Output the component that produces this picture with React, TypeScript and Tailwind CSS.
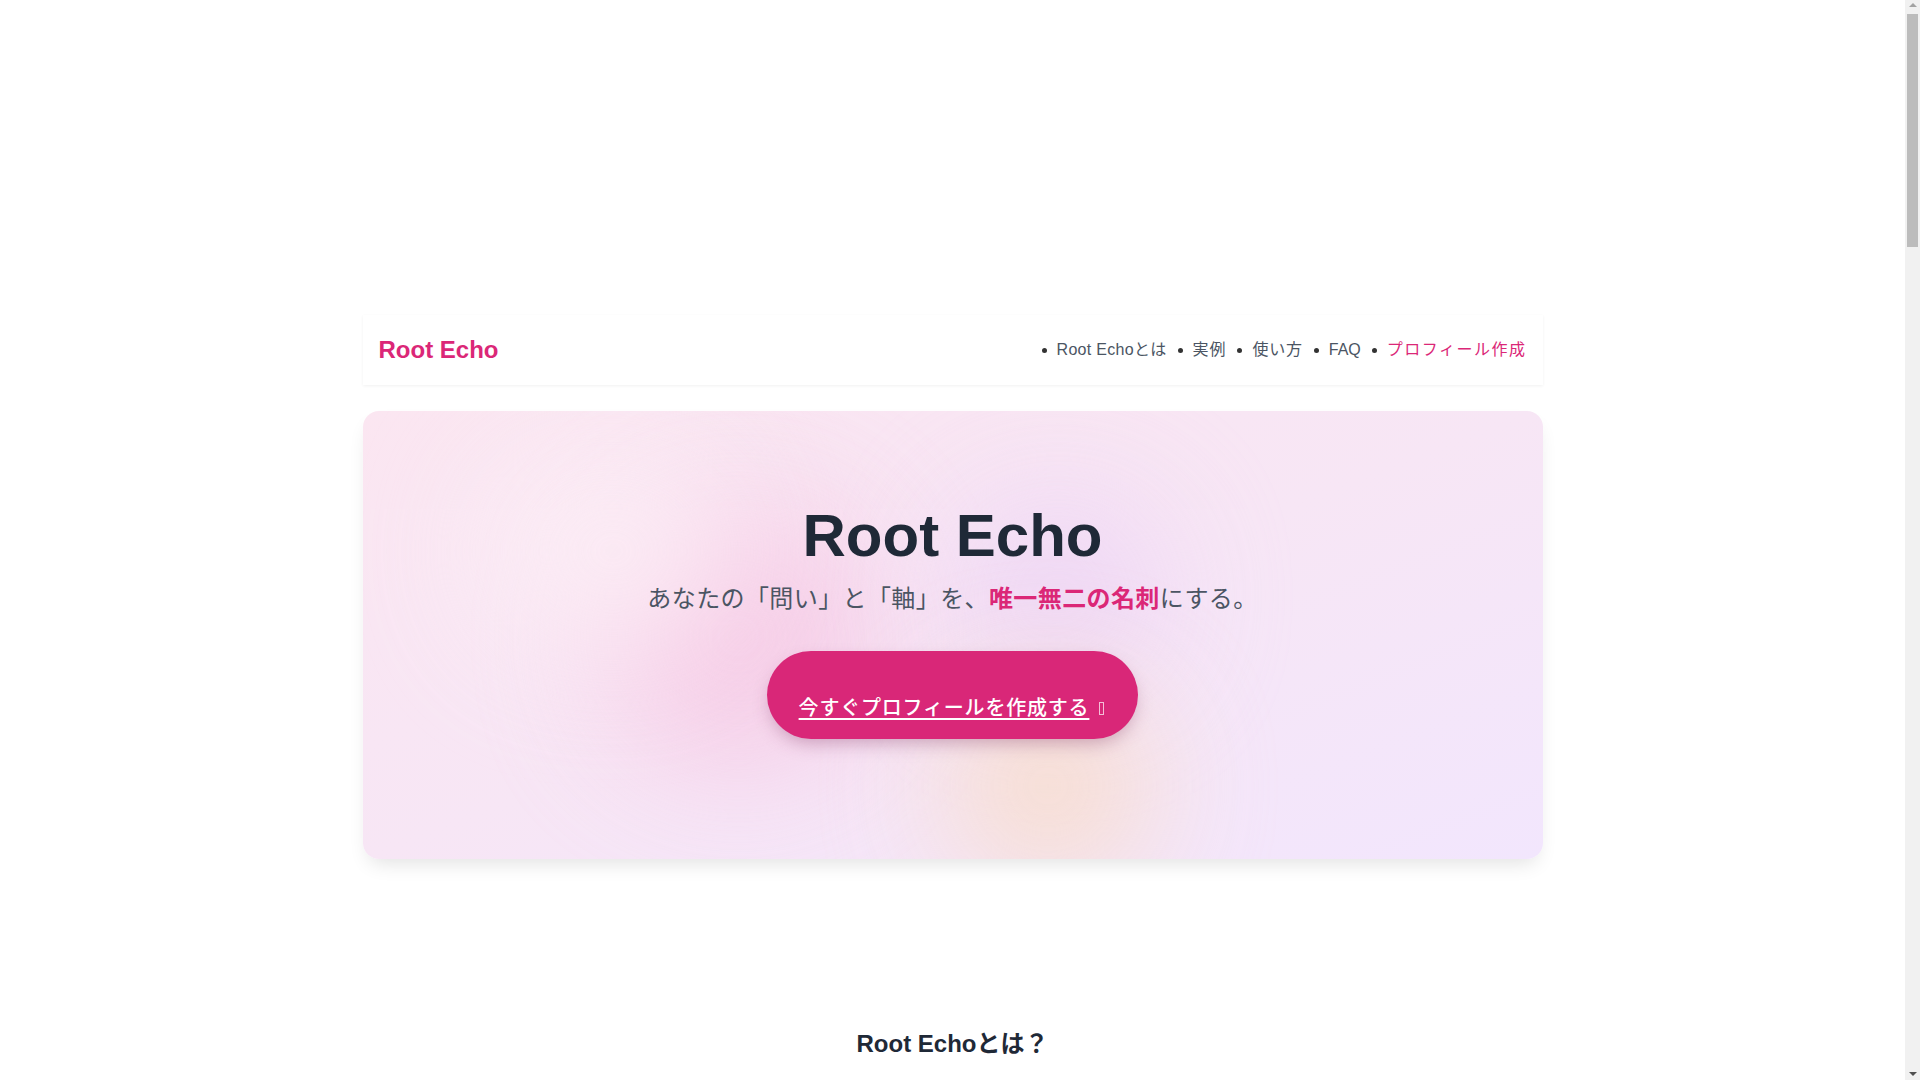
import React from "react";

const sans = '"Liberation Sans", Arial, "Noto Sans CJK JP", sans-serif';

function FakeScrollbar() {
  return (
    <div className="fixed right-0 top-0 w-[15px] h-screen bg-[#f1f1f1] flex flex-col items-center">
      <div className="mt-[3px] w-0 h-0 border-l-[4px] border-r-[4px] border-b-[4px] border-l-transparent border-r-transparent border-b-[#a3a3a3]" />
      <div className="mt-[7px] w-[11px] h-[233px] bg-[#bcbcbc]" />
      <div className="flex-1" />
      <div className="mb-[4px] w-0 h-0 border-l-[4px] border-r-[4px] border-t-[4px] border-l-transparent border-r-transparent border-t-[#505050]" />
    </div>
  );
}

function NavItem({ children, className }: { children: React.ReactNode; className: string }) {
  return (
    <li className="flex items-center">
      <span className="w-[5px] h-[5px] rounded-full bg-[#333] mr-[10px]" />
      <span className={className}>{children}</span>
    </li>
  );
}

export default function App() {
  return (
    <div className="min-h-screen bg-white" style={{ fontFamily: sans }}>
      <div className="w-[1905px]">
        <div className="w-[1180px] mx-auto pt-[315px]">
          {/* Header */}
          <header className="h-[70px] flex items-center justify-between px-4 bg-white shadow-[0_1px_3px_rgba(0,0,0,0.06)]">
            <a className="text-[24px] font-bold text-[#db2777] leading-8">Root Echo</a>
            <nav>
              <ul className="flex items-center gap-[11px] text-[16px] text-[#4b5563]">
                <NavItem className="tracking-[0.3px]">Root Echoとは</NavItem>
                <NavItem className="tracking-[0.9px]">実例</NavItem>
                <NavItem className="tracking-[0.8px]">使い方</NavItem>
                <NavItem className="">FAQ</NavItem>
                <NavItem className="text-[#db2777] tracking-[1.5px]">プロフィール作成</NavItem>
              </ul>
            </nav>
          </header>

          {/* Hero */}
          <section className="relative mt-[26px] h-[448px] rounded-2xl overflow-hidden bg-gradient-to-br from-[#fbe6f1] via-[#f7e6f5] to-[#f2e6fd] shadow-[0_10px_20px_-6px_rgba(0,0,0,0.12)]">
            <div className="absolute left-[240px] top-[95px] w-[270px] h-[260px] rounded-full bg-[#f5c2e1] opacity-75 blur-3xl" />
            <div className="absolute left-[590px] top-[90px] w-[210px] h-[190px] rounded-full bg-[#ecd2f5] opacity-80 blur-3xl" />
            <div className="absolute left-[585px] top-[280px] w-[200px] h-[190px] rounded-full bg-[#f8dcc6] opacity-85 blur-3xl" />
            <div className="absolute left-[120px] top-[40px] w-[260px] h-[200px] rounded-full bg-[#fdf1f7] opacity-70 blur-3xl" />
            <div className="relative flex flex-col items-center pt-[95px]">
              <h1 className="text-[60px] leading-[60px] font-bold text-[#1f2937]">Root Echo</h1>
              <p className="mt-[17px] text-[24px] leading-8 text-[#4b5563] tracking-[0.4px]">
                あなたの「問い」と「軸」を、
                <span className="font-bold text-[#db2777]">唯一無二の名刺</span>
                にする。
              </p>
              <a className="mt-[36px] inline-flex items-center rounded-full bg-[#d92778] pl-[32px] pr-[34px] pt-[43px] pb-[17px] text-white shadow-[0_8px_18px_-4px_rgba(120,40,90,0.35)]">
                <span className="text-[20px] leading-7 font-medium tracking-[0.8px] underline underline-offset-[3px]">
                  今すぐプロフィールを作成する
                </span>
                <span className="ml-[10px] inline-block w-[5px] h-[13px] border border-white/70" />
              </a>
            </div>
          </section>

          {/* About */}
          <section className="mt-[169px] flex flex-col items-center">
            <h2 className="text-[24px] leading-8 font-bold text-[#1f2937]">Root Echoとは？</h2>
            <div className="h-[3700px]" />
          </section>
        </div>
      </div>
      <FakeScrollbar />
    </div>
  );
}
